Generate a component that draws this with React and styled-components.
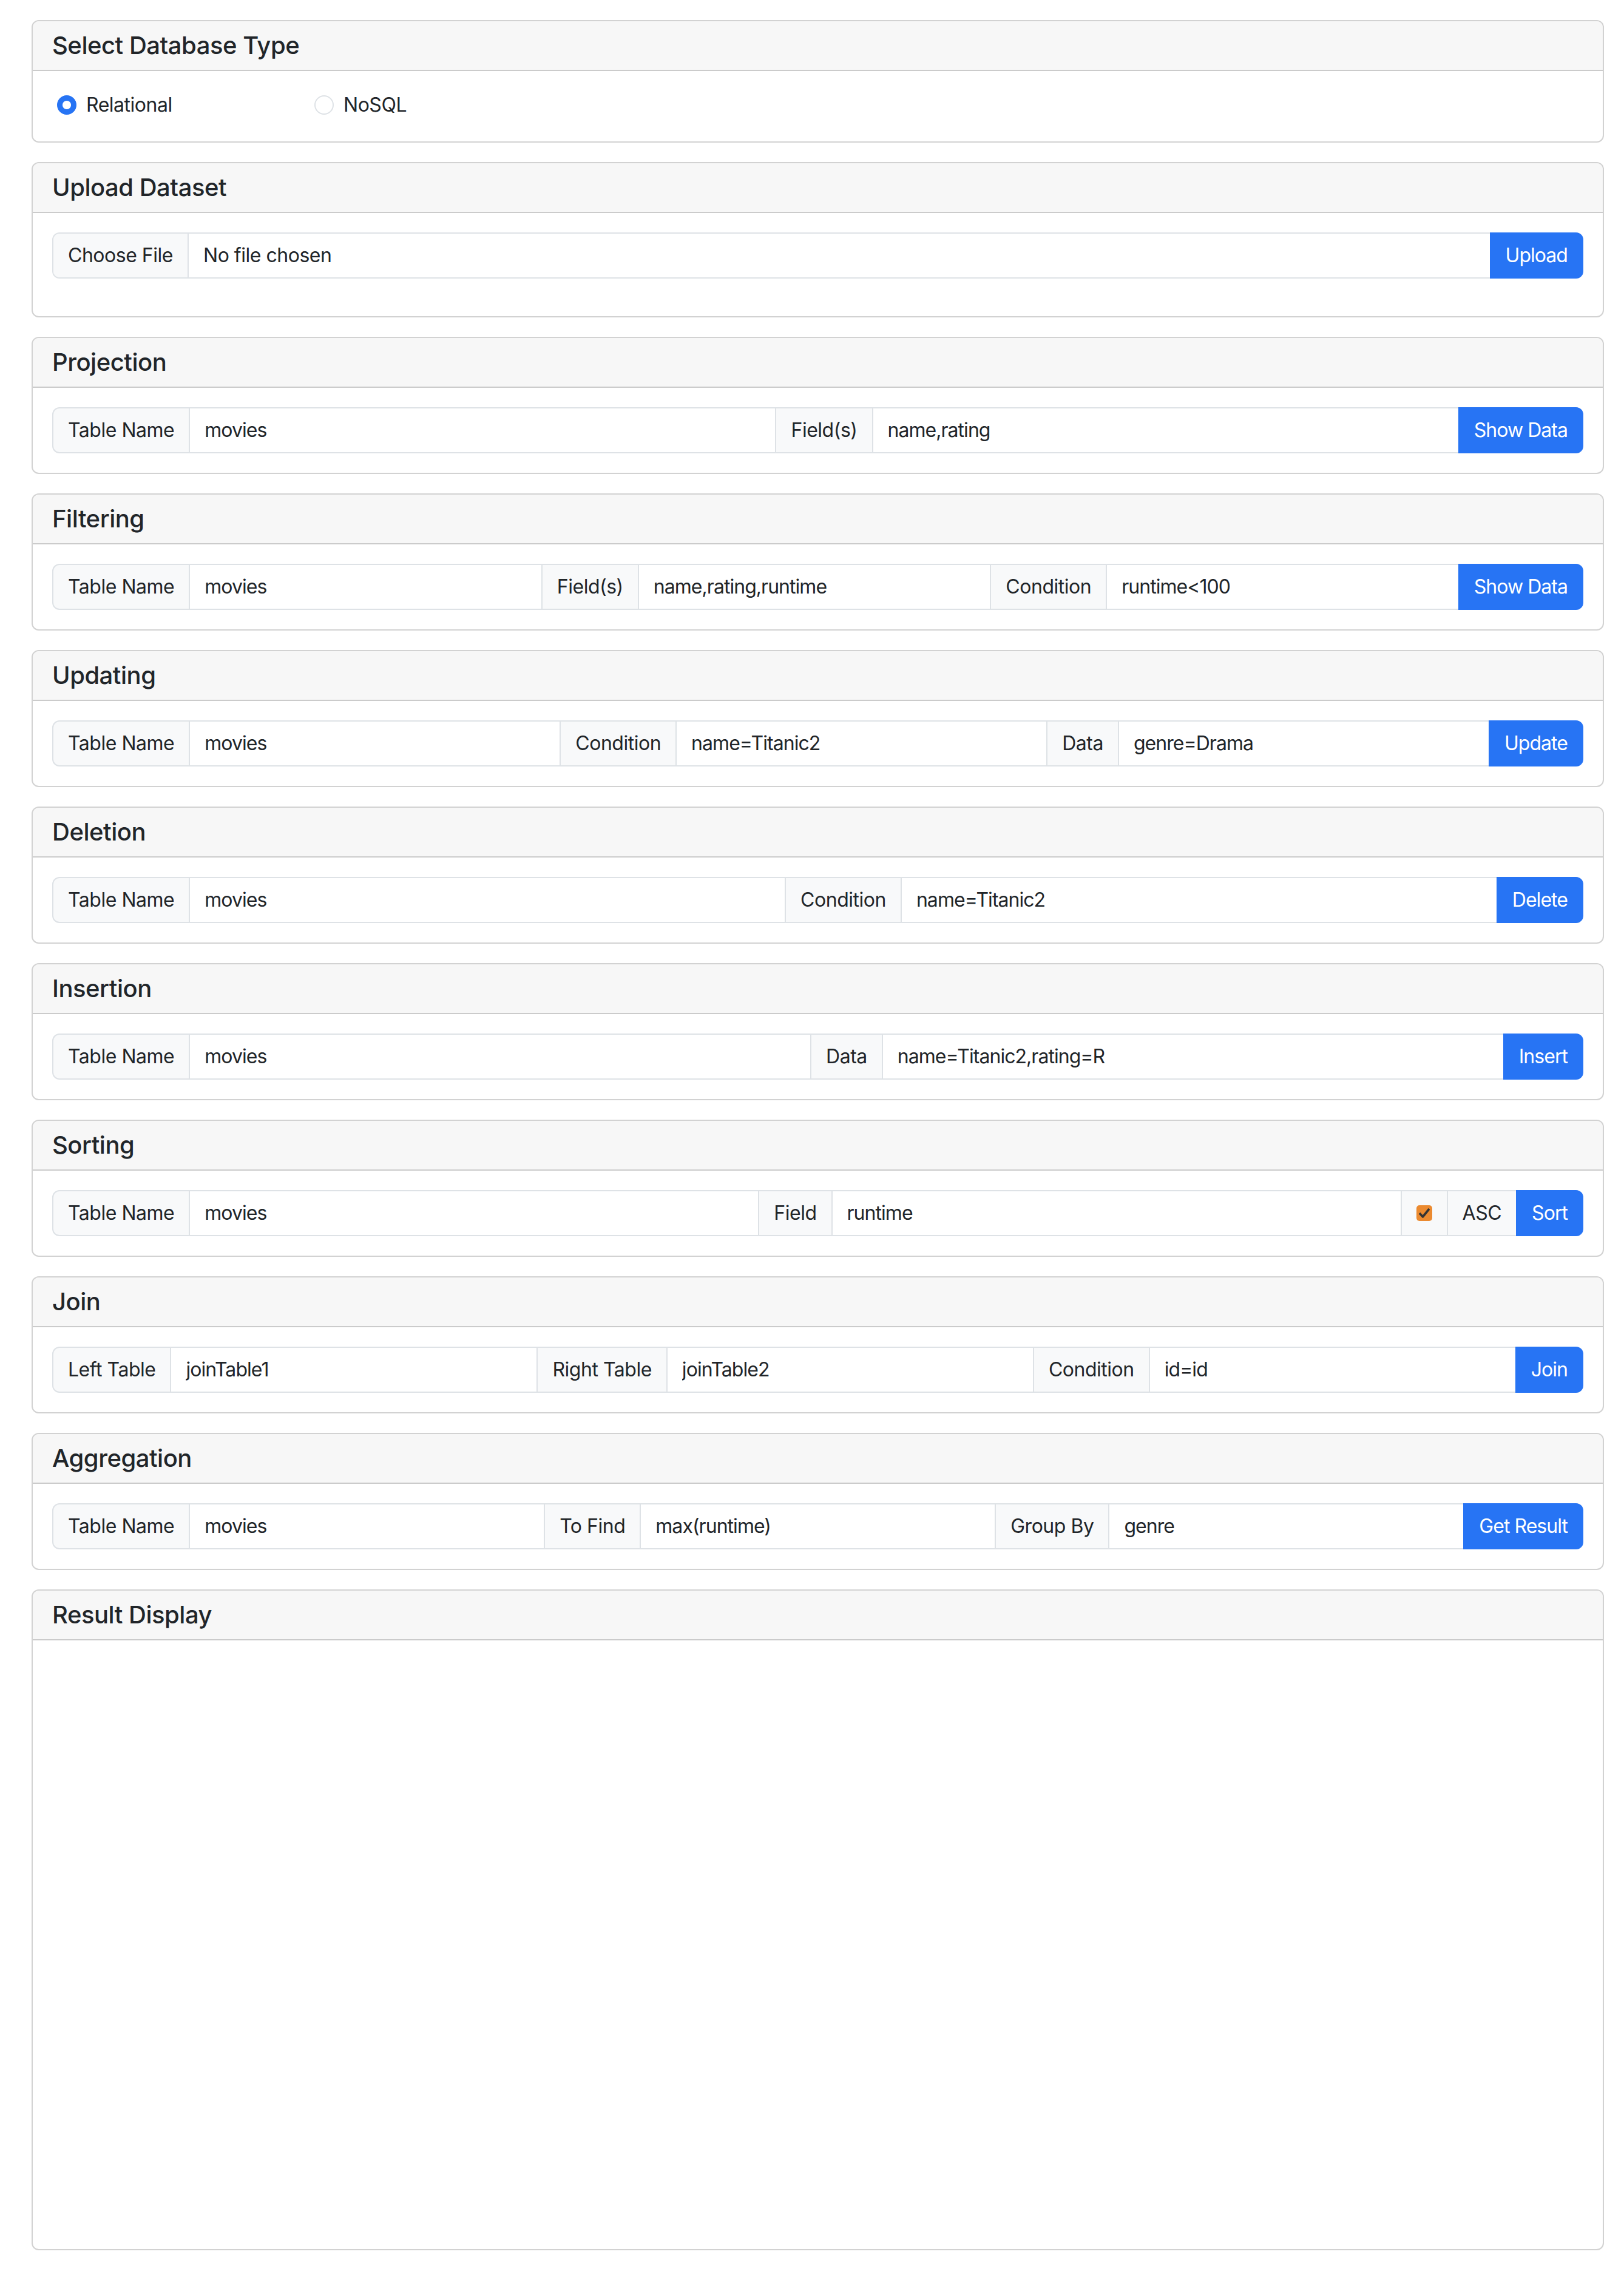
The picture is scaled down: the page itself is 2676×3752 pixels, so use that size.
import React from 'react';
import styled, { createGlobalStyle } from 'styled-components';

const GlobalStyle = createGlobalStyle`
  body {
    margin: 0;
    background: #fff;
    color: #212529;
    font-family: Inter, "Noto Sans", "Liberation Sans", sans-serif;
    letter-spacing: -0.03em;
  }
  * { box-sizing: border-box; }
`;

const Page = styled.div`
  padding: 33px 33px 16px 52px;
`;

const Card = styled.section`
  border: 2px solid rgba(0, 0, 0, 0.175);
  border-radius: 12px;
  margin-bottom: 32px;
  overflow: hidden;
  background: #fff;
`;

const CardHeader = styled.div`
  padding: 16px 32px;
  background: #f7f7f7;
  border-bottom: 2px solid rgba(0, 0, 0, 0.175);
`;

const Title = styled.h5`
  margin: 0;
  font-size: 40px;
  font-weight: 500;
  line-height: 48px;
  color: #212529;
`;

const CardBody = styled.div`
  padding: 32px;
  min-height: ${(p) => (p.$tall ? '1003px' : 'auto')};
`;

const RadioRow = styled.div`
  display: grid;
  grid-template-columns: 424px 424px;
  padding-left: 8px;
  min-height: 52px;
`;

const RadioLabel = styled.label`
  display: flex;
  align-items: center;
  gap: 16px;
  height: 48px;
  font-size: 32px;
  line-height: 48px;
`;

const Radio = styled.input.attrs({ type: 'radio' })`
  appearance: none;
  flex-shrink: 0;
  margin: 0;
  width: 32px;
  height: 32px;
  border-radius: 50%;
  border: 2px solid #dee2e6;
  background: #fff;
  &:checked {
    border-color: #2774f4;
    background: radial-gradient(circle, #fff 0 6.5px, #2774f4 7.5px);
  }
`;

const Group = styled.div`
  display: flex;
  align-items: stretch;
  width: 100%;
  margin-bottom: ${(p) => p.$gap || 0}px;
`;

const Addon = styled.span`
  display: flex;
  align-items: center;
  flex-shrink: 0;
  padding: 12px 24px;
  font-size: 32px;
  line-height: 48px;
  white-space: nowrap;
  background: #f8f9fa;
  border: 2px solid #dee2e6;
  color: #212529;
  &:not(:first-child) { margin-left: -2px; }
  &:first-child { border-radius: 12px 0 0 12px; }
`;

const Field = styled.input`
  flex: 1 1 auto;
  width: 1%;
  min-width: 0;
  margin: 0;
  padding: 12px 24px;
  font-family: inherit;
  font-size: 32px;
  line-height: 48px;
  letter-spacing: -0.03em;
  color: #212529;
  background: #fff;
  border: 2px solid #dee2e6;
  outline: none;
  &:not(:first-child) { margin-left: -2px; }
`;

const FileField = styled.div`
  flex: 1 1 auto;
  display: flex;
  align-items: stretch;
  border: 2px solid #dee2e6;
  border-radius: 12px 0 0 12px;
  overflow: hidden;
  font-size: 32px;
  line-height: 48px;
`;

const FileButton = styled.span`
  padding: 12px 24px;
  background: #f8f9fa;
  border-right: 2px solid #dee2e6;
`;

const FileName = styled.span`
  padding: 12px 24px;
`;

const Check = styled.span`
  display: flex;
  flex: 0 0 26px;
  width: 26px;
  height: 26px;
  border-radius: 5px;
  background: #eb8a30;
`;

const Button = styled.button`
  flex-shrink: 0;
  margin: 0 0 0 -2px;
  padding: 12px 24px;
  font-family: inherit;
  font-size: 32px;
  line-height: 48px;
  letter-spacing: -0.03em;
  color: #fff;
  background: #2774f4;
  border: 2px solid #2774f4;
  border-radius: 0 12px 12px 0;
  white-space: nowrap;
  position: relative;
`;

const queries = [
  {
    title: 'Projection',
    parts: [['Table Name'], ['', 'movies'], ['Field(s)'], ['', 'name,rating']],
    action: 'Show Data',
  },
  {
    title: 'Filtering',
    parts: [['Table Name'], ['', 'movies'], ['Field(s)'], ['', 'name,rating,runtime'], ['Condition'], ['', 'runtime<100']],
    action: 'Show Data',
  },
  {
    title: 'Updating',
    parts: [['Table Name'], ['', 'movies'], ['Condition'], ['', 'name=Titanic2'], ['Data'], ['', 'genre=Drama']],
    action: 'Update',
  },
  {
    title: 'Deletion',
    parts: [['Table Name'], ['', 'movies'], ['Condition'], ['', 'name=Titanic2']],
    action: 'Delete',
  },
  {
    title: 'Insertion',
    parts: [['Table Name'], ['', 'movies'], ['Data'], ['', 'name=Titanic2,rating=R']],
    action: 'Insert',
  },
  {
    title: 'Sorting',
    parts: [['Table Name'], ['', 'movies'], ['Field'], ['', 'runtime'], ['check'], ['ASC']],
    action: 'Sort',
  },
  {
    title: 'Join',
    parts: [['Left Table'], ['', 'joinTable1'], ['Right Table'], ['', 'joinTable2'], ['Condition'], ['', 'id=id']],
    action: 'Join',
  },
  {
    title: 'Aggregation',
    parts: [['Table Name'], ['', 'movies'], ['To Find'], ['', 'max(runtime)'], ['Group By'], ['', 'genre']],
    action: 'Get Result',
  },
];

function CheckBox() {
  return (
    <Check>
      <svg width="26" height="26" viewBox="0 0 26 26">
        <path d="M5 13l5.5 6L21 6" fill="none" stroke="#333" strokeWidth="3.6" strokeLinejoin="round" />
      </svg>
    </Check>
  );
}

function Panel({ title, tall, children }) {
  return (
    <Card>
      <CardHeader>
        <Title>{title}</Title>
      </CardHeader>
      <CardBody $tall={tall}>{children}</CardBody>
    </Card>
  );
}

function App() {
  return (
    <Page>
      <GlobalStyle />
      <Panel title="Select Database Type">
        <RadioRow>
          <RadioLabel>
            <Radio name="db" defaultChecked />
            Relational
          </RadioLabel>
          <RadioLabel>
            <Radio name="db" />
            NoSQL
          </RadioLabel>
        </RadioRow>
      </Panel>

      <Panel title="Upload Dataset">
        <Group $gap={30}>
          <FileField>
            <FileButton>Choose File</FileButton>
            <FileName>No file chosen</FileName>
          </FileField>
          <Button>Upload</Button>
        </Group>
      </Panel>

      {queries.map((q) => (
        <Panel key={q.title} title={q.title}>
          <Group>
            {q.parts.map(([label, value], i) =>
              label === 'check' ? (
                <Addon key={i}><CheckBox /></Addon>
              ) : label ? (
                <Addon key={i}>{label}</Addon>
              ) : (
                <Field key={i} defaultValue={value} />
              )
            )}
            <Button>{q.action}</Button>
          </Group>
        </Panel>
      ))}

      <Panel title="Result Display" tall />
    </Page>
  );
}

export default App;
